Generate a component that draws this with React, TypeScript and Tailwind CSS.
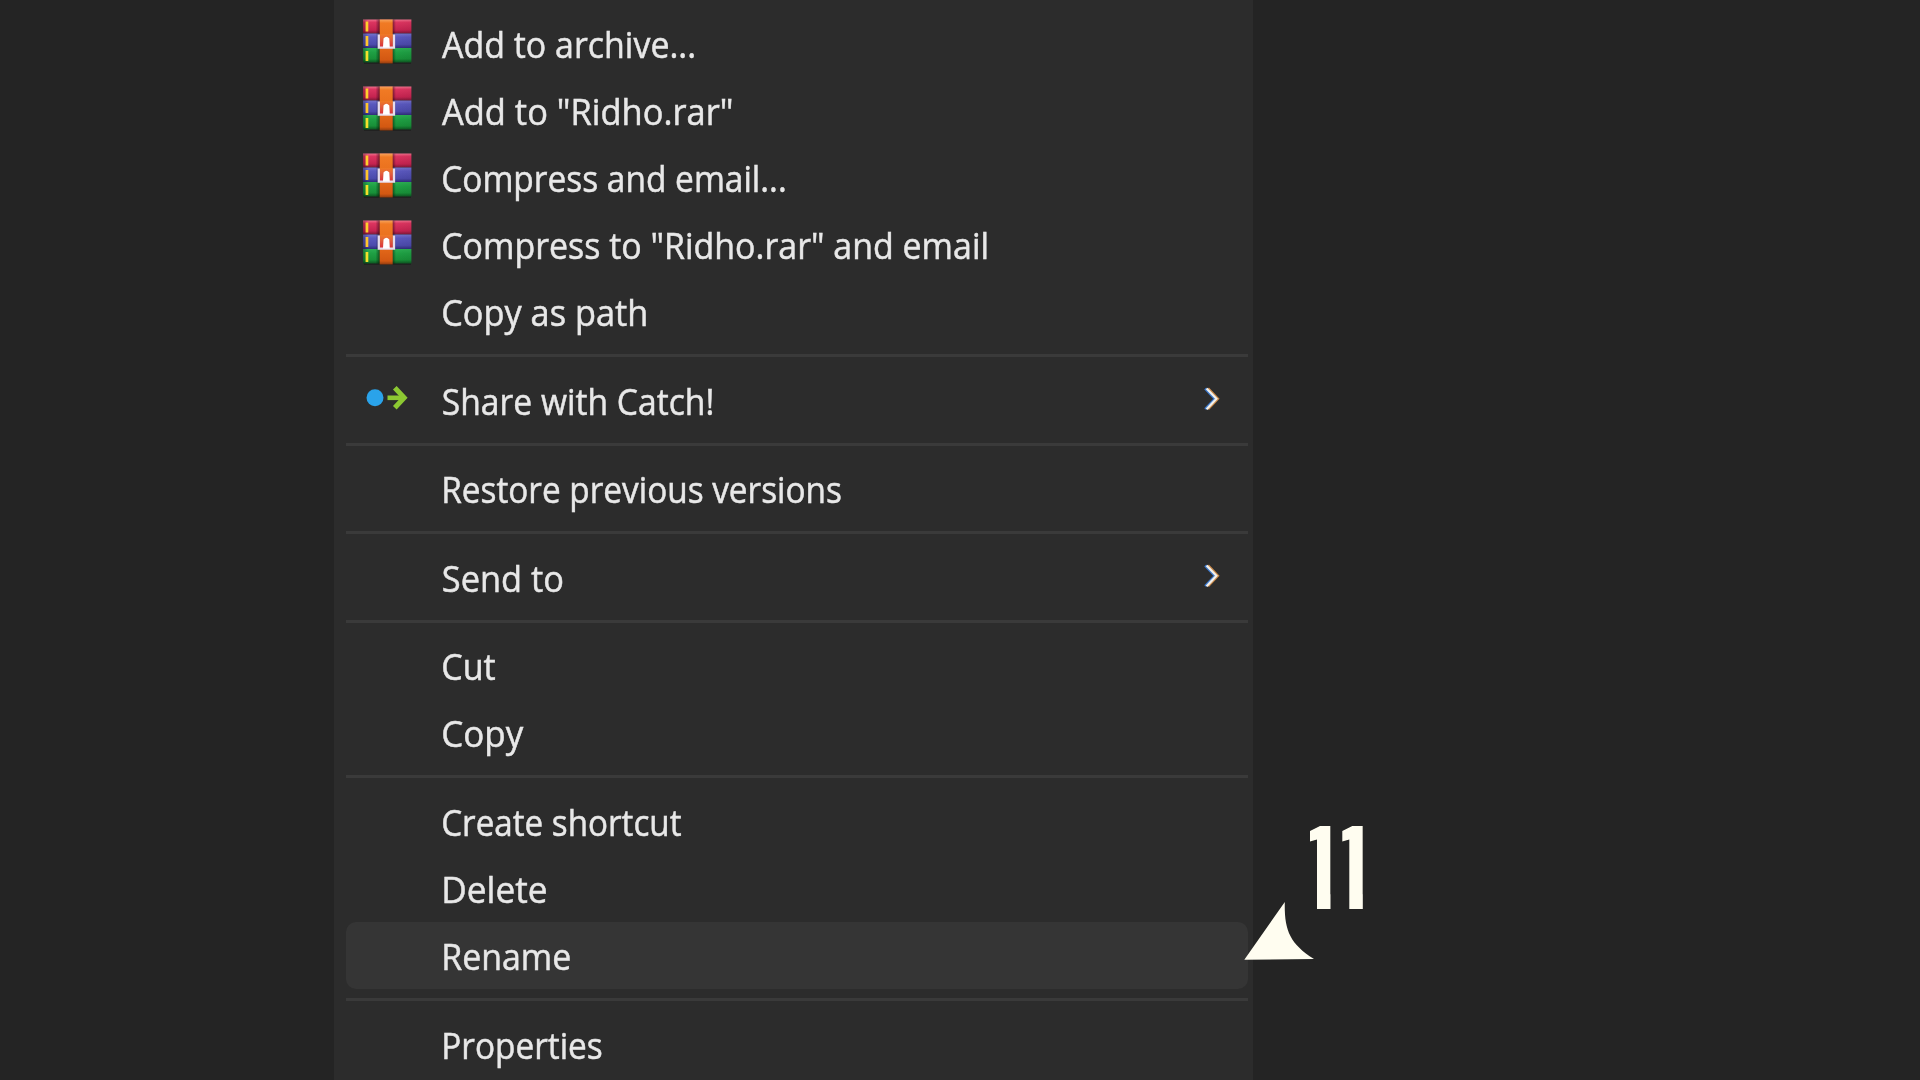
import type { ReactNode } from "react";

type Item = {
  label: string;
  scale: number;
  shift?: number;
  icon?: "rar" | "catch";
  submenu?: boolean;
  active?: boolean;
};

const groups: Item[][] = [
  [
    { label: "Add to archive...", scale: 0.922, shift: 2, icon: "rar" },
    { label: 'Add to "Ridho.rar"', scale: 0.936, shift: 2, icon: "rar" },
    { label: "Compress and email...", scale: 0.909, shift: 1.2, icon: "rar" },
    { label: 'Compress to "Ridho.rar" and email', scale: 0.922, shift: 1.2, icon: "rar" },
    { label: "Copy as path", scale: 0.933, shift: 1.2 },
  ],
  [{ label: "Share with Catch!", scale: 0.914, shift: 1.8, icon: "catch", submenu: true }],
  [{ label: "Restore previous versions", scale: 0.906, shift: 1.2 }],
  [{ label: "Send to", scale: 0.935, shift: 1.8, submenu: true }],
  [
    { label: "Cut", scale: 0.925, shift: 1.2 },
    { label: "Copy", scale: 0.95, shift: 1.2 },
  ],
  [
    { label: "Create shortcut", scale: 0.902, shift: 1.2 },
    { label: "Delete", scale: 0.957, shift: 1.2 },
    { label: "Rename", scale: 0.922, shift: 1.2, active: true },
  ],
  [{ label: "Properties", scale: 0.907, shift: 1.2 }],
];

function Gradients() {
  return (
    <svg className="absolute size-0" aria-hidden="true">
      <defs>
        <linearGradient id="red" x1="0" y1="0" x2="0" y2="1">
          <stop offset="0" stopColor="#f0708c" />
          <stop offset="0.2" stopColor="#dc3560" />
          <stop offset="0.75" stopColor="#c42350" />
          <stop offset="1" stopColor="#7c1736" />
        </linearGradient>
        <linearGradient id="blue" x1="0" y1="0" x2="0" y2="1">
          <stop offset="0" stopColor="#7573cc" />
          <stop offset="0.25" stopColor="#5a58be" />
          <stop offset="0.75" stopColor="#4c4aac" />
          <stop offset="1" stopColor="#2f2d78" />
        </linearGradient>
        <linearGradient id="green" x1="0" y1="0" x2="0" y2="1">
          <stop offset="0" stopColor="#2cae52" />
          <stop offset="0.3" stopColor="#1fa044" />
          <stop offset="0.75" stopColor="#189038" />
          <stop offset="1" stopColor="#0d5521" />
        </linearGradient>
        <linearGradient id="strap" x1="0" y1="0" x2="0" y2="1">
          <stop offset="0" stopColor="#f8a45c" />
          <stop offset="0.08" stopColor="#f07a24" />
          <stop offset="0.6" stopColor="#e56a1a" />
          <stop offset="0.92" stopColor="#d35812" />
          <stop offset="1" stopColor="#8f3c10" />
        </linearGradient>
        <linearGradient id="shade" x1="0" y1="0" x2="1" y2="0">
          <stop offset="0" stopColor="#000" stopOpacity="0.3" />
          <stop offset="0.1" stopColor="#000" stopOpacity="0" />
          <stop offset="0.26" stopColor="#000" stopOpacity="0" />
          <stop offset="0.34" stopColor="#000" stopOpacity="0.45" />
          <stop offset="0.61" stopColor="#000" stopOpacity="0.45" />
          <stop offset="0.68" stopColor="#000" stopOpacity="0" />
          <stop offset="1" stopColor="#000" stopOpacity="0.05" />
        </linearGradient>
        <linearGradient id="buckle" x1="0" y1="0" x2="0" y2="1">
          <stop offset="0" stopColor="#f07a24" />
          <stop offset="0.4" stopColor="#e2603c" />
          <stop offset="1" stopColor="#d8303c" />
        </linearGradient>
      </defs>
    </svg>
  );
}

function RarIcon() {
  return (
    <svg width="49" height="46" viewBox="0 0 49 46" className="mb-[3px] blur-[0.6px]">
      <rect x="1" y="42" width="47" height="3" fill="#000" opacity="0.25" />
      <rect x="0" y="0.5" width="48.4" height="14" fill="url(#red)" />
      <rect x="0" y="14.5" width="48.4" height="14.5" fill="url(#blue)" />
      <rect x="0" y="29" width="48.4" height="14.5" fill="url(#green)" />
      <rect x="0" y="0.5" width="48.4" height="43" fill="url(#shade)" />
      <rect x="2.6" y="2.5" width="2.7" height="10" fill="#ffd02b" />
      <rect x="2.6" y="17" width="2.7" height="10" fill="#ffc62b" />
      <rect x="2.6" y="32" width="2.7" height="10" fill="#f5e02b" />
      <rect x="16.7" y="0.5" width="13" height="44" fill="url(#strap)" />
      <rect x="16.7" y="15" width="13" height="13" fill="url(#buckle)" />
      <path d="M15.8 15.5 V28.6 H31 V15.5" stroke="#e6dcec" strokeWidth="2.3" fill="none" />
      <path d="M20.5 19.5 q2.9 -3.4 5.8 0 L26.8 28.5 H20 Z" fill="#fff" />
    </svg>
  );
}

function CatchIcon() {
  return (
    <svg width="42" height="28" viewBox="0 0 42 28" className="ml-[3.6px] mb-[3px] blur-[0.6px]">
      <circle cx="9" cy="13.8" r="8.5" fill="#2aa3ea" />
      <path d="M21.5 13.8 H38" stroke="#8cc832" strokeWidth="4.6" fill="none" />
      <path d="M28.8 3.8 L38.2 13.8 L28.8 23.8" stroke="#8cc832" strokeWidth="5" fill="none" />
    </svg>
  );
}

function Chevron() {
  return (
    <svg width="18" height="26" viewBox="0 0 18 26" fill="none" className="mb-0.5 blur-[0.5px]">
      <path d="M5 2.5 L14.8 12.8 L5 23.2" stroke="#c98a4a" strokeWidth="2.6" />
      <path d="M2.2 2.5 L12 12.8 L2.2 23.2" stroke="#3c78cc" strokeWidth="2.6" />
      <path d="M3.6 2.5 L13.4 12.8 L3.6 23.2" stroke="#f2f0ea" strokeWidth="2.2" />
    </svg>
  );
}

function MenuRow({ item }: { item: Item }) {
  let icon: ReactNode = null;
  if (item.icon === "rar") icon = <RarIcon />;
  if (item.icon === "catch") icon = <CatchIcon />;
  return (
    <div className={`flex h-[67.05px] items-center rounded-[10px] pr-[27px] ${item.active ? "bg-[#353535]" : ""}`}>
      <div className="flex w-[94px] shrink-0 items-center pl-[16.7px]">{icon}</div>
      <span
        className="origin-left whitespace-nowrap leading-[50px] text-[#e8e8e8] blur-[0.4px] [-webkit-text-stroke:0.5px_#e8e8e8]"
        style={{ transform: `translate(${item.shift ?? 0}px, 1.2px) scaleX(${item.scale})` }}
      >
        {item.label}
      </span>
      {item.submenu && (
        <div className="ml-auto">
          <Chevron />
        </div>
      )}
    </div>
  );
}

function Marker() {
  return (
    <div className="absolute top-[826px] left-[1244px] h-[134px] w-[120px] text-[#fffdf0]">
      {/* Step number: condensed numerals trimmed of their feet */}
      <div className="ml-[66px] h-[83px] w-[54px] [clip-path:polygon(0_5px,10px_0,20.5px_0,20.5px_83px,7px_83px,7px_13.5px,0_15.5px,0_5px,32.3px_5px,42.3px_0,52.8px_0,52.8px_83px,39.3px_83px,39.3px_13.5px,32.3px_15.5px,32.3px_5px)]">
        <span className="ml-[-15.6px] inline-block origin-left scale-x-[0.77] font-['DejaVu_Sans_Condensed','DejaVu_Sans',sans-serif] text-[114.5px] leading-[87px] font-bold tracking-[-29.7px]">
          11
        </span>
      </div>
      <svg className="absolute bottom-0 left-0" width="71" height="59" viewBox="0 0 71 59">
        <path d="M40.8 1 C40.2 28 45 42.5 70 58 L0.3 58.8 Z" fill="currentColor" />
      </svg>
    </div>
  );
}

export default function App() {
  return (
    <main className="relative h-[1080px] w-[1920px] overflow-hidden bg-[#242424]">
      <Gradients />
      <div className="ml-[334px] h-full w-[919px] bg-[#2c2c2c] pt-[9.5px] pr-[5px] pl-3 font-['Open_Sans','Noto_Sans',sans-serif] text-[36.8px]">
        {groups.map((group, i) => (
          <section key={group[0].label}>
            {i > 0 && (
              <div className="flex h-[21.5px] items-center">
                <div className="h-[3px] w-full bg-[#3a3a3a]" />
              </div>
            )}
            {group.map((item) => (
              <MenuRow key={item.label} item={item} />
            ))}
          </section>
        ))}
      </div>
      <Marker />
    </main>
  );
}
